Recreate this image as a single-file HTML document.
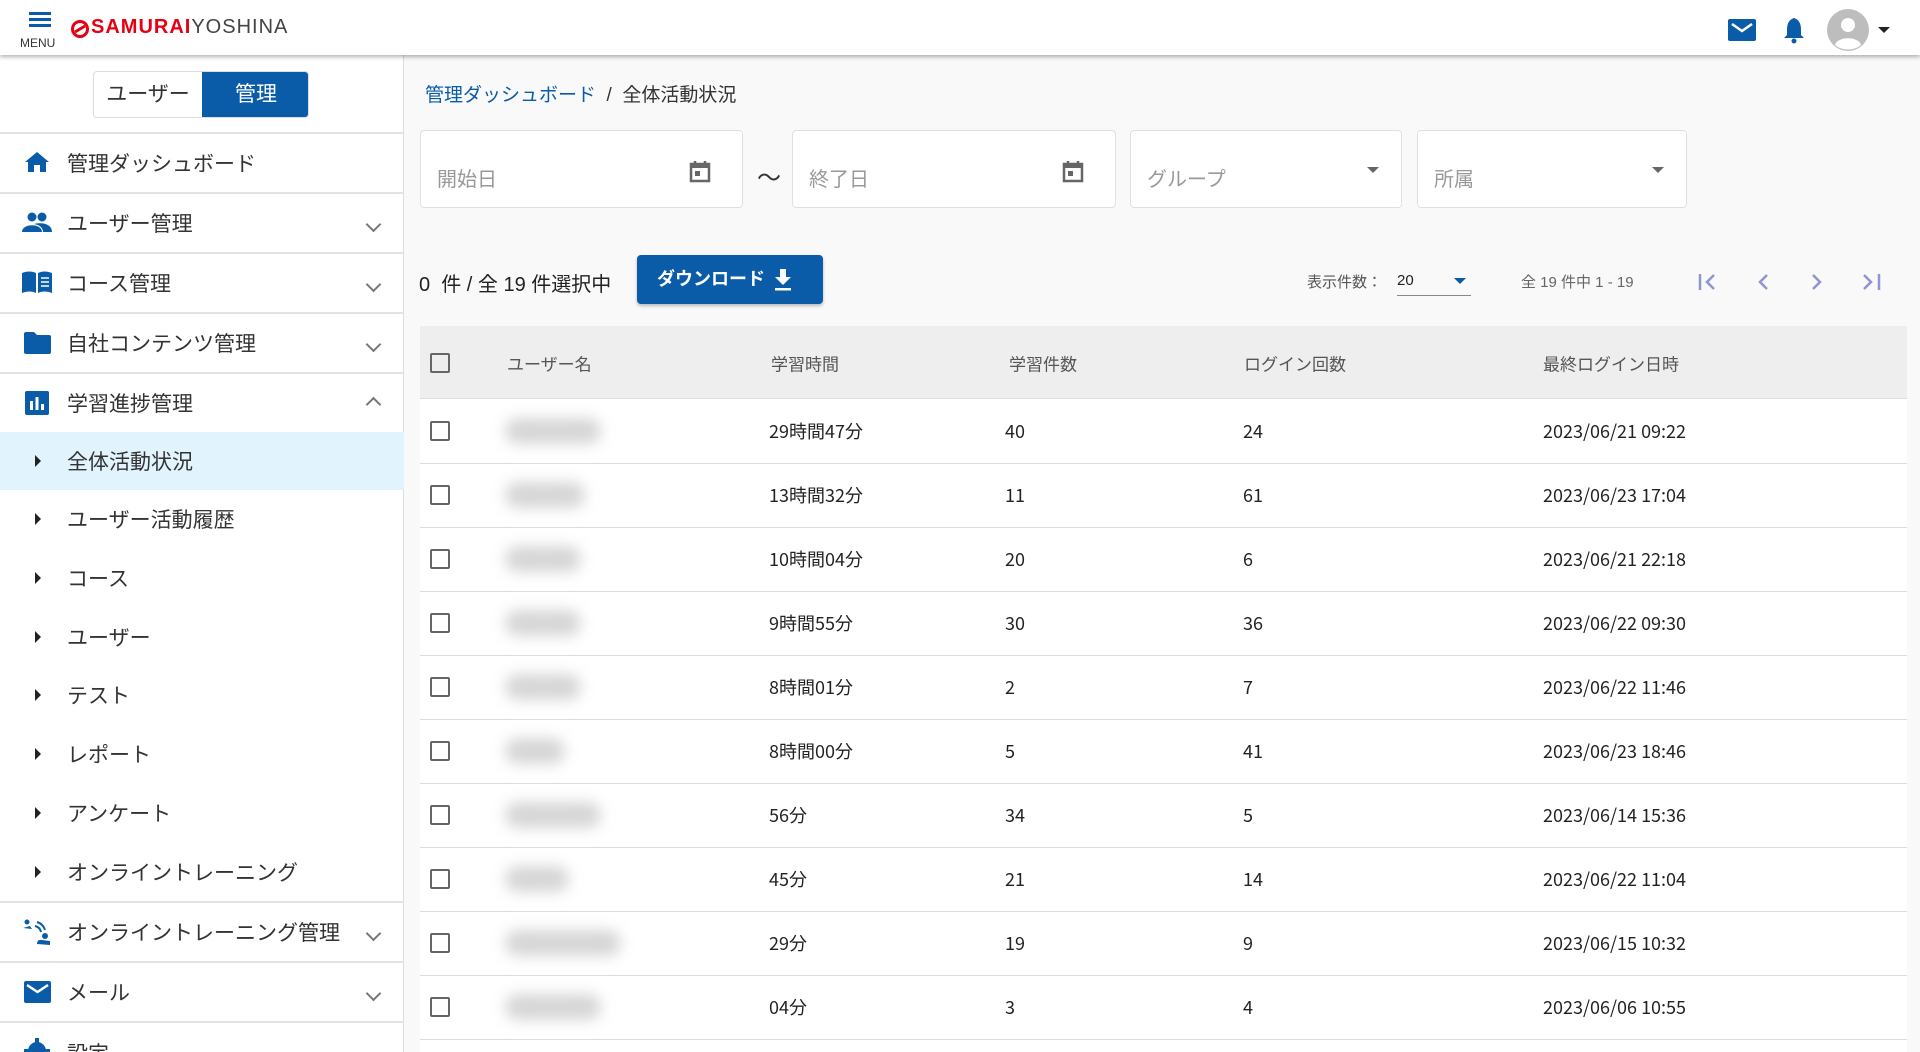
<!DOCTYPE html>
<html style="width:1920px;height:1052px;overflow:hidden"><head><meta charset="utf-8"><style>
*{box-sizing:border-box;margin:0;padding:0}
body{width:1920px;height:1052px;overflow:hidden;background:#f9f9f9;font-family:"Liberation Sans","Noto Sans CJK JP",sans-serif;color:#222;position:relative}
.a{position:absolute}
.hdr{left:0;top:0;width:1920px;height:55px;background:#fff;box-shadow:0 2px 4px rgba(0,0,0,.3);z-index:5}
.side{left:0;top:55px;width:404px;height:997px;background:#fff;border-right:1px solid #ddd}
.div{left:0;width:404px;height:2px;background:#e2e2e2}
.it{left:67px;font-size:21px;color:#333;transform:translateY(-50%)}
.chev{left:368px;width:11px;height:11px;border-right:2px solid #777;border-bottom:2px solid #777;transform:rotate(45deg)}
.tri{left:35px;width:0;height:0;border-left:6px solid #222;border-top:6px solid transparent;border-bottom:6px solid transparent;transform:translateY(-50%)}
.box{background:#fff;border:1px solid #e0e0e0;border-radius:4px;top:130px;height:78px}
.ph{font-size:20px;color:#999;top:32px;left:16px}
.cal{top:28px;width:24px;height:24px}
.dd{top:36px;width:0;height:0;border-left:6px solid transparent;border-right:6px solid transparent;border-top:6px solid #666}
.tbl{left:420px;top:326px;width:1487px;height:726px;background:#fff}
.th{top:326px;height:73px;left:420px;width:1487px;background:#eee;border-bottom:1px solid #ddd}
.cb{width:20px;height:20px;border:2.5px solid #666;border-radius:2px;left:430px}
.row{left:420px;width:1487px;height:1px;background:#ddd}
.c{font-size:18px;color:#222;transform:translateY(-50%);font-family:"Noto Sans CJK JP","Liberation Sans",sans-serif}
.h{font-size:17px;color:#555;transform:translateY(-50%)}
.blur{height:26px;background:#d6d6d6;filter:blur(7px);border-radius:13px;transform:translateY(-50%)}
</style></head><body>
<div class="a hdr">
 <div class="a" style="left:29px;top:12px;width:22px;height:3px;background:#0a5ca8;box-shadow:0 6px 0 #0a5ca8,0 12px 0 #0a5ca8"></div>
 <div class="a" style="left:20px;top:36px;font-size:12px;color:#333">MENU</div>
 <svg class="a" style="left:71px;top:20px" width="18" height="18" viewBox="0 0 18 18"><circle cx="9" cy="9" r="7.5" fill="none" stroke="#e60012" stroke-width="3"/><path d="M4 12 L14 6" stroke="#e60012" stroke-width="3"/></svg>
 <div class="a" style="left:91px;top:16px;font-size:20px;font-weight:bold;letter-spacing:1px;color:#e60012">SAMURAI<span style="color:#444;font-weight:normal">YOSHINA</span></div>
 <svg class="a" style="left:1728px;top:19px" width="28" height="22" viewBox="0 0 28 22"><rect width="28" height="22" rx="2" fill="#0a5ca8"/><path d="M4 5 L14 12 L24 5" stroke="#fff" stroke-width="2.5" fill="none"/></svg>
 <svg class="a" style="left:1782px;top:16px" width="24" height="28" viewBox="0 0 24 28"><path d="M12 2 C6 4 5 9 5 14 L5 19 L2 22 L22 22 L19 19 L19 14 C19 9 18 4 12 2Z" fill="#0a5ca8"/><circle cx="12" cy="25" r="2.5" fill="#0a5ca8"/></svg>
 <svg class="a" style="left:1826px;top:8px" width="44" height="44" viewBox="0 0 44 44"><circle cx="22" cy="22" r="21" fill="#bdbdbd"/><circle cx="22" cy="17" r="7" fill="#fff"/><path d="M9 37 C11 28 33 28 35 37 C28 43 16 43 9 37Z" fill="#fff"/></svg>
 <div class="a" style="left:1878px;top:27px;border-left:6px solid transparent;border-right:6px solid transparent;border-top:6px solid #222"></div>
</div>
<div class="a side"></div>
<div class="a" style="left:93px;top:71px;width:216px;height:47px;border:1px solid #ddd;border-radius:4px;background:#fff;overflow:hidden">
 <div class="a" style="left:0;top:0;width:108px;height:45px;font-size:21px;line-height:45px;text-align:center;color:#333">ユーザー</div>
 <div class="a" style="left:108px;top:0;width:108px;height:45px;background:#0a5ca8;font-size:21px;line-height:45px;text-align:center;color:#fff">管理</div>
</div>
<div class="a div" style="top:132px"></div>
<svg class="a" style="left:24px;top:151px" width="26" height="22" viewBox="0 0 26 22"><path d="M13 1 L1 11 L4 11 L4 21 L10 21 L10 14 L16 14 L16 21 L22 21 L22 11 L25 11Z" fill="#0a5ca8"/></svg>
<div class="a it" style="top:163px">管理ダッシュボード</div>
<div class="a div" style="top:192px"></div>
<svg class="a" style="left:22px;top:212px" width="30" height="20" viewBox="0 0 30 20"><circle cx="10" cy="5" r="4.5" fill="#0a5ca8"/><circle cx="20" cy="5" r="4.5" fill="#0a5ca8"/><path d="M0 20 C0 11 20 11 20 20Z M12 12 C20 10 30 12 30 20 L21 20 C21 16 18 13 12 12Z" fill="#0a5ca8"/></svg>
<div class="a it" style="top:223px">ユーザー管理</div><div class="a chev" style="top:219px"></div>
<div class="a div" style="top:252px"></div>
<svg class="a" style="left:22px;top:271px" width="30" height="22" viewBox="0 0 30 22"><path d="M0 2 C5 0 10 0 14 2 L14 22 C10 20 5 20 0 22Z M16 2 C20 0 25 0 30 2 L30 22 C25 20 20 20 16 22Z" fill="#0a5ca8"/><path d="M19 7 H27 M19 11 H27 M19 15 H27" stroke="#fff" stroke-width="1.5"/></svg>
<div class="a it" style="top:283px">コース管理</div><div class="a chev" style="top:279px"></div>
<div class="a div" style="top:312px"></div>
<svg class="a" style="left:24px;top:332px" width="27" height="22" viewBox="0 0 27 22"><path d="M0 2 Q0 0 2 0 L10 0 L13 3 L25 3 Q27 3 27 5 L27 20 Q27 22 25 22 L2 22 Q0 22 0 20Z" fill="#0a5ca8"/></svg>
<div class="a it" style="top:343px">自社コンテンツ管理</div><div class="a chev" style="top:339px"></div>
<div class="a div" style="top:372px"></div>
<svg class="a" style="left:25px;top:391px" width="24" height="24" viewBox="0 0 24 24"><rect width="24" height="24" rx="2" fill="#0a5ca8"/><rect x="5" y="10" width="3" height="9" fill="#fff"/><rect x="10.5" y="6" width="3" height="13" fill="#fff"/><rect x="16" y="13" width="3" height="6" fill="#fff"/></svg>
<div class="a it" style="top:403px">学習進捗管理</div><div class="a chev" style="top:399px;transform:rotate(225deg)"></div>
<div class="a" style="left:0;top:432px;width:404px;height:58px;background:#e1f3fc"></div>
<div class="a tri" style="top:461px"></div><div class="a it" style="top:461px">全体活動状況</div>
<div class="a tri" style="top:519px"></div><div class="a it" style="top:519px">ユーザー活動履歴</div>
<div class="a tri" style="top:578px"></div><div class="a it" style="top:578px">コース</div>
<div class="a tri" style="top:637px"></div><div class="a it" style="top:637px">ユーザー</div>
<div class="a tri" style="top:695px"></div><div class="a it" style="top:695px">テスト</div>
<div class="a tri" style="top:754px"></div><div class="a it" style="top:754px">レポート</div>
<div class="a tri" style="top:813px"></div><div class="a it" style="top:813px">アンケート</div>
<div class="a tri" style="top:872px"></div><div class="a it" style="top:872px">オンライントレーニング</div>
<div class="a div" style="top:901px"></div>
<svg class="a" style="left:23px;top:919px" width="28" height="26" viewBox="0 0 28 26"><circle cx="4" cy="3" r="2.5" fill="#0a5ca8"/><path d="M0 9 L7 7 L9 10Z" fill="#0a5ca8"/><path d="M12 7 A8 8 0 0 1 18 13 M14 3 A12 12 0 0 1 22 11" stroke="#0a5ca8" stroke-width="2" fill="none"/><circle cx="22" cy="17" r="3" fill="#0a5ca8"/><path d="M14 25 Q14 20 19 21 L27 22 L27 26Z" fill="#0a5ca8"/></svg>
<div class="a it" style="top:932px">オンライントレーニング管理</div><div class="a chev" style="top:928px"></div>
<div class="a div" style="top:961px"></div>
<svg class="a" style="left:24px;top:981px" width="27" height="22" viewBox="0 0 27 22"><rect width="27" height="22" rx="2" fill="#0a5ca8"/><path d="M3 4 L13.5 11 L24 4" stroke="#fff" stroke-width="2.5" fill="none"/></svg>
<div class="a it" style="top:992px">メール</div><div class="a chev" style="top:988px"></div>
<div class="a div" style="top:1021px"></div>
<svg class="a" style="left:24px;top:1038px" width="26" height="26" viewBox="0 0 26 26"><circle cx="13" cy="13" r="9" fill="#0a5ca8"/><path d="M11 0 H15 V26 H11Z M0 11 V15 H26 V11Z" fill="#0a5ca8"/></svg>
<div class="a" style="left:67px;top:1038px;font-size:21px;color:#333">設定</div>

<div class="a" style="left:425px;top:80px;font-size:19px;color:#0a5ca8">管理ダッシュボード <span style="color:#333">&nbsp;/&nbsp; 全体活動状況</span></div>
<div class="a box" style="left:420px;width:323px"><div class="a ph">開始日</div>
 <svg class="a cal" style="left:267px" viewBox="0 0 24 24"><path d="M3 5 H21 V22 H3Z" fill="none" stroke="#666" stroke-width="2.5"/><rect x="3" y="5" width="18" height="4" fill="#666"/><path d="M7 2 V6 M17 2 V6" stroke="#666" stroke-width="2.5"/><rect x="7" y="12" width="5" height="5" fill="#666"/></svg></div>
<div class="a" style="left:757px;top:158px;font-size:24px;color:#333">～</div>
<div class="a box" style="left:792px;width:324px"><div class="a ph">終了日</div>
 <svg class="a cal" style="left:268px" viewBox="0 0 24 24"><path d="M3 5 H21 V22 H3Z" fill="none" stroke="#666" stroke-width="2.5"/><rect x="3" y="5" width="18" height="4" fill="#666"/><path d="M7 2 V6 M17 2 V6" stroke="#666" stroke-width="2.5"/><rect x="7" y="12" width="5" height="5" fill="#666"/></svg></div>
<div class="a box" style="left:1130px;width:272px"><div class="a ph">グループ</div><div class="a dd" style="left:236px"></div></div>
<div class="a box" style="left:1417px;width:270px"><div class="a ph">所属</div><div class="a dd" style="left:234px"></div></div>

<div class="a" style="left:419px;top:268px;font-size:20px;color:#222">0 &nbsp;件 / 全 19 件選択中</div>
<div class="a" style="left:637px;top:255px;width:186px;height:49px;background:#0a5ca8;border-radius:4px;box-shadow:0 2px 3px rgba(0,0,0,.25);color:#fff;font-size:18px;font-weight:bold;line-height:49px;padding-left:20px">ダウンロード
 <svg class="a" style="left:136px;top:14px" width="20" height="22" viewBox="0 0 20 22"><path d="M7 0 H13 V8 H18 L10 16 L2 8 H7Z" fill="#fff"/><rect x="2" y="19" width="16" height="2.5" fill="#fff"/></svg></div>
<div class="a" style="left:1307px;top:271px;font-size:15px;color:#555">表示件数：</div>
<div class="a" style="left:1397px;top:272px;font-size:15px;color:#222">20</div>
<div class="a" style="left:1397px;top:295px;width:74px;height:1px;background:#888"></div>
<div class="a" style="left:1454px;top:278px;border-left:6px solid transparent;border-right:6px solid transparent;border-top:6px solid #0a5ca8"></div>
<div class="a" style="left:1521px;top:271px;font-size:15px;color:#666">全 19 件中 1 - 19</div>
<svg class="a" style="left:1697px;top:270px" width="190" height="24" viewBox="0 0 190 24" stroke="#8f95cf" stroke-width="2.5" fill="none"><path d="M3 4 V20 M17 5 L10 12 L17 19"/><path d="M70 5 L63 12 L70 19"/><path d="M116 5 L123 12 L116 19"/><path d="M167 5 L174 12 L167 19 M182 4 V20"/></svg>

<div class="a tbl"></div>
<div class="a th"></div>
<div class="a cb" style="top:353px"></div>
<div class="a h" style="left:507px;top:363px">ユーザー名</div>
<div class="a h" style="left:771px;top:363px">学習時間</div>
<div class="a h" style="left:1009px;top:363px">学習件数</div>
<div class="a h" style="left:1244px;top:363px">ログイン回数</div>
<div class="a h" style="left:1543px;top:363px">最終ログイン日時</div>

<div id="rows"></div>
<script>
var d=[["29時間47分",40,24,"2023/06/21 09:22",96],["13時間32分",11,61,"2023/06/23 17:04",80],["10時間04分",20,6,"2023/06/21 22:18",76],["9時間55分",30,36,"2023/06/22 09:30",76],["8時間01分",2,7,"2023/06/22 11:46",76],["8時間00分",5,41,"2023/06/23 18:46",60],["56分",34,5,"2023/06/14 15:36",96],["45分",21,14,"2023/06/22 11:04",64],["29分",19,9,"2023/06/15 10:32",116],["04分",3,4,"2023/06/06 10:55",96]];
var h="";
d.forEach(function(r,i){var y=431+i*64;
h+='<div class="a cb" style="top:'+(y-10)+'px"></div><div class="a blur" style="left:505px;top:'+y+'px;width:'+r[4]+'px"></div>'+
'<div class="a c" style="left:769px;top:'+y+'px">'+r[0]+'</div><div class="a c" style="left:1005px;top:'+y+'px">'+r[1]+'</div><div class="a c" style="left:1243px;top:'+y+'px">'+r[2]+'</div><div class="a c" style="left:1543px;top:'+y+'px">'+r[3]+'</div><div class="a row" style="top:'+(y+32)+'px"></div>';});
document.getElementById("rows").innerHTML=h;
</script>
</body></html>
